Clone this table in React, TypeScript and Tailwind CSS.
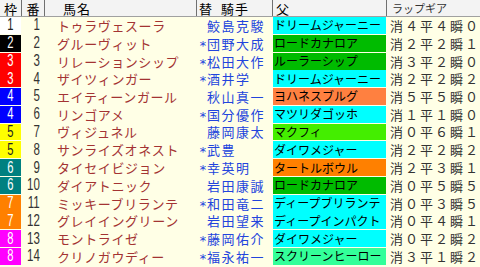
const frameColors: Record<number, string> = {
  1: 'bg-white text-[#222]',
  2: 'bg-black text-white',
  3: 'bg-[#ff0000] text-white',
  4: 'bg-[#0000ff] text-white',
  5: 'bg-[#ffff00] text-[#222]',
  6: 'bg-[#008080] text-white',
  7: 'bg-[#ff8000] text-white',
  8: 'bg-[#ff00ff] text-white',
};

const sireColors: Record<string, string> = {
  cyan: 'bg-[#00ffff]',
  green: 'bg-[#00bb00]',
  lime: 'bg-[#44ee00]',
  coral: 'bg-[#ff8040]',
  orange: 'bg-[#ff8000]',
  mint: 'bg-[#33ff99]',
};

type Horse = {
  frame: number;
  no: number;
  name: string;
  mark: string;
  jockey: string;
  sire: string;
  sireColor: string;
  lap: string;
};

const horses: Horse[] = [
  { frame: 1, no: 1, name: 'トゥラヴェスーラ', mark: '', jockey: '鮫島克駿', sire: 'ドリームジャーニー', sireColor: 'cyan', lap: '消４平４瞬０' },
  { frame: 2, no: 2, name: 'グルーヴィット', mark: '*', jockey: '団野大成', sire: 'ロードカナロア', sireColor: 'green', lap: '消２平２瞬１' },
  { frame: 3, no: 3, name: 'リレーションシップ', mark: '*', jockey: '松田大作', sire: 'ルーラーシップ', sireColor: 'green', lap: '消３平２瞬０' },
  { frame: 3, no: 4, name: 'ザイツィンガー', mark: '*', jockey: '酒井学', sire: 'ドリームジャーニー', sireColor: 'cyan', lap: '消２平２瞬２' },
  { frame: 4, no: 5, name: 'エイティーンガール', mark: '', jockey: '秋山真一', sire: 'ヨハネスブルグ', sireColor: 'coral', lap: '消５平５瞬０' },
  { frame: 4, no: 6, name: 'リンゴアメ', mark: '*', jockey: '国分優作', sire: 'マツリダゴッホ', sireColor: 'cyan', lap: '消１平１瞬０' },
  { frame: 5, no: 7, name: 'ヴィジュネル', mark: '', jockey: '藤岡康太', sire: 'マクフィ', sireColor: 'lime', lap: '消０平６瞬１' },
  { frame: 5, no: 8, name: 'サンライズオネスト', mark: '*', jockey: '武豊', sire: 'ダイワメジャー', sireColor: 'cyan', lap: '消２平２瞬２' },
  { frame: 6, no: 9, name: 'タイセイビジョン', mark: '*', jockey: '幸英明', sire: 'タートルボウル', sireColor: 'orange', lap: '消２平３瞬１' },
  { frame: 6, no: 10, name: 'ダイアトニック', mark: '', jockey: '岩田康誠', sire: 'ロードカナロア', sireColor: 'green', lap: '消０平５瞬５' },
  { frame: 7, no: 11, name: 'ミッキーブリランテ', mark: '*', jockey: '和田竜二', sire: 'ディープブリランテ', sireColor: 'cyan', lap: '消０平３瞬５' },
  { frame: 7, no: 12, name: 'グレイイングリーン', mark: '', jockey: '岩田望来', sire: 'ディープインパクト', sireColor: 'cyan', lap: '消０平４瞬１' },
  { frame: 8, no: 13, name: 'モントライゼ', mark: '*', jockey: '藤岡佑介', sire: 'ダイワメジャー', sireColor: 'cyan', lap: '消０平２瞬２' },
  { frame: 8, no: 14, name: 'クリノガウディー', mark: '*', jockey: '福永祐一', sire: 'スクリーンヒーロー', sireColor: 'mint', lap: '消３平１瞬２' },
];

const jp = "font-['Noto_Sans_CJK_JP','Noto_Sans',sans-serif]";
const cols = 'grid grid-cols-[22px_23px_152px_76px_114px_93px]';

export default function App() {
  return (
    <div className={`w-[480px] h-[267px] overflow-hidden bg-[#ffffe6] ${jp}`}>
      {/* Header */}
      <div className={`${cols} h-[17px] bg-[#f3f3f3] border-b border-[#a0a0a0] text-[13px] leading-[13px] text-black`}>
        <div className="flex items-center justify-center border-r border-[#707070]">枠</div>
        <div className="flex items-center justify-center border-r border-[#707070]">番</div>
        <div className="flex items-center pl-[18px] tracking-[1px] border-r border-[#707070]">馬名</div>
        <div className="flex items-center pl-[2px] tracking-[1px] border-r border-[#707070]">
          <span>替</span>
          <span className="ml-[8px]">騎手</span>
        </div>
        <div className="flex items-center pl-[3px] border-r border-[#707070]">父</div>
        <div className="flex items-center pl-[5px] text-[11px] text-[#333]">ラップギア</div>
      </div>

      {/* Rows */}
      {horses.map((h) => (
        <div key={h.no} className={`${cols} h-[17.75px] leading-none`}>
          <div className="pr-[1px] pb-[1px]">
            <div className={`h-full flex items-center justify-center ${frameColors[h.frame]}`}>
              <span className="inline-block scale-x-[0.7] text-[16px] font-['Liberation_Sans',sans-serif]">{h.frame}</span>
            </div>
          </div>
          <div className="flex items-center justify-end pr-[5px] pb-[1px] text-[#333]">
            <span className="inline-block origin-right scale-x-[0.72] text-[16px] font-['Liberation_Sans',sans-serif]">{h.no}</span>
          </div>
          <div className="flex items-center pl-[12px] pb-[1px] text-[13px] tracking-[0.6px] text-[#a33333] whitespace-nowrap">
            {h.name}
          </div>
          <div className="flex items-center pb-[1px] text-[13px] tracking-[1.5px] text-[#2244dd] whitespace-nowrap">
            <span className="w-[10px] pl-[2px] pt-[4px] text-[13px] font-['DejaVu_Sans_Mono',monospace]">{h.mark}</span>
            <span>{h.jockey}</span>
          </div>
          <div className="pr-[1px] pb-[1px]">
            <div
              className={`h-full flex items-center pl-[1px] text-[12px] text-black whitespace-nowrap overflow-hidden ${sireColors[h.sireColor]}`}
            >
              {h.sire}
            </div>
          </div>
          <div className="flex items-center pl-[3px] pb-[1px] text-[13px] tracking-[2px] text-[#333] whitespace-nowrap">
            {h.lap}
          </div>
        </div>
      ))}
    </div>
  );
}
